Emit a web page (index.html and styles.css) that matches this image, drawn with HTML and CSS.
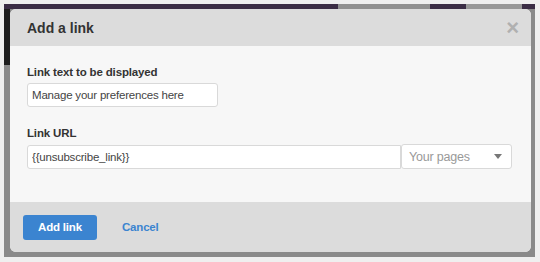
FILE: index.html
```html
<!DOCTYPE html>
<html lang="en">
<head>
    <meta charset="UTF-8">
    <title>Add a link</title>
    <link rel="stylesheet" href="styles.css">
</head>
<body>
<!-- 暗色遮罩层 -->
<div class="backdrop">
    <!-- 弹窗 -->
    <div class="modal">
        <div class="modal-header">
            <h3 class="modal-title">Add a link</h3>
            <span class="modal-close">&times;</span>
        </div>
        <div class="modal-body">
            <label class="field-label">Link text to be displayed</label>
            <input class="text-input short" type="text" value="Manage your preferences here">

            <label class="field-label second">Link URL</label>
            <div class="url-row">
                <input class="text-input url" type="text" value="{{unsubscribe_link}}">
                <div class="select">
                    <span>Your pages</span>
                    <svg class="caret" width="8" height="5" viewBox="0 0 8 5"><path d="M0 0 L8 0 L4 5 Z" fill="#777"/></svg>
                </div>
            </div>
        </div>
        <div class="modal-footer">
            <a class="btn-primary" href="javascript:;">Add link</a>
            <a class="btn-link" href="javascript:;">Cancel</a>
        </div>
    </div>
</div>
</body>
</html>
```

FILE: styles.css
```css
* {
    margin: 0;
    padding: 0;
    box-sizing: border-box;
}

body {
    width: 540px;
    height: 262px;
    padding: 4px 5px 5px 4px;
    background-color: #efefef;
    font-family: "Liberation Sans", Arial, sans-serif;
    color: #333;
}

/* 遮罩 (后面页面的残影) */
.backdrop {
    height: 253px;
    padding: 5px 4px 5px 6px;
    background-color: #8a8a8a;
    background-image:
        linear-gradient(to right, #3b2d45 334px, #909090 334px, #909090 426px, #3b2d45 426px, #3b2d45 462px, #989898 462px, #989898 518px, #3b2d45 518px),
        linear-gradient(#1e1e1e, #1e1e1e);
    background-size: 100% 5px, 6px 56px;
    background-position: 0 0, 0 5px;
    background-repeat: no-repeat;
}

.modal {
    height: 243px;
    border-radius: 6px;
    overflow: hidden;
    background-color: #f7f7f7;
    display: flex;
    flex-direction: column;
}

.modal-header {
    height: 37px;
    background-color: #dcdcdc;
    display: flex;
    align-items: center;
    justify-content: space-between;
    padding: 0 12px 0 17px;
}

.modal-title {
    font-size: 14px;
    font-weight: bold;
    color: #333;
}

.modal-close {
    font-size: 22px;
    font-weight: bold;
    color: #b0b0b0;
    line-height: 1;
}

.modal-body {
    flex: 1;
    padding: 20px 17px 0;
}

.field-label {
    display: block;
    font-size: 11.5px;
    letter-spacing: -0.15px;
    font-weight: bold;
    color: #333;
    margin-bottom: 5px;
}

.field-label.second {
    margin-top: 20px;
}

.text-input {
    display: block;
    height: 24px;
    border: 1px solid #d9d9d9;
    border-radius: 3px;
    background-color: #fff;
    padding: 0 4px;
    font-family: "Liberation Sans", Arial, sans-serif;
    font-size: 11.5px;
    letter-spacing: -0.2px;
    color: #444;
    outline: none;
}

.text-input.short {
    width: 191px;
}

.url-row {
    display: flex;
    align-items: flex-start;
}

.text-input.url {
    width: 374px;
    margin-top: 1px;
    border-radius: 3px 0 0 3px;
}

.select {
    width: 111px;
    height: 25px;
    border: 1px solid #d9d9d9;
    border-radius: 3px;
    background-color: #fff;
    display: flex;
    align-items: center;
    justify-content: space-between;
    padding: 0 9px 0 7px;
    font-size: 12.5px;
    letter-spacing: -0.2px;
    color: #999;
}

.modal-footer {
    height: 50px;
    background-color: #dcdcdc;
    display: flex;
    align-items: center;
    padding: 0 0 0 13px;
}

.btn-primary {
    display: block;
    width: 74px;
    height: 25px;
    line-height: 25px;
    text-align: center;
    background-color: #3b84d0;
    border-radius: 3px;
    color: #fff;
    font-size: 11.5px;
    letter-spacing: -0.2px;
    font-weight: bold;
    text-decoration: none;
}

.btn-link {
    margin-left: 25px;
    color: #3b84d0;
    font-size: 11.5px;
    letter-spacing: -0.2px;
    font-weight: bold;
    text-decoration: none;
}
```
